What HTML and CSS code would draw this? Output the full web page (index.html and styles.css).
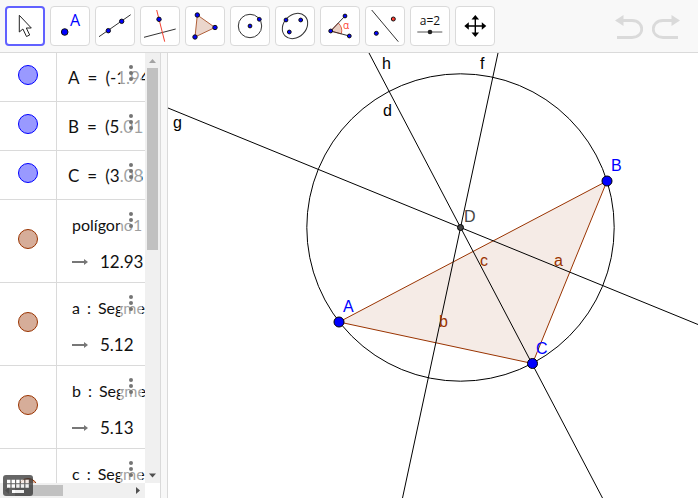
FILE: index.html
```html
<!DOCTYPE html>
<html lang="es">
<head>
    <meta charset="UTF-8">
    <meta name="viewport" content="width=device-width, initial-scale=1.0">
    <title>Circuncentro</title>
    <link rel="stylesheet" href="styles.css">
</head>
<body>
    <!-- Barra de herramientas -->
    <header class="toolbar">
        <button type="button" class="tool selected" aria-label="Elige y mueve">
            <svg viewBox="0 0 32 32"><path d="M10.3 5.3V22l3.6-3 3.6 7.5 3.2-1.5-3.4-7h5z" fill="#fff" stroke="#222"/></svg>
        </button>
        <button type="button" class="tool" aria-label="Punto">
            <svg viewBox="0 0 32 32">
                <circle class="dot" cx="10.7" cy="22" r="3.3"/>
                <text class="icon-letter" x="16" y="16">A</text>
            </svg>
        </button>
        <button type="button" class="tool" aria-label="Recta">
            <svg viewBox="0 0 32 32">
                <path class="thin" d="M0 26.7L31.7 4.7"/>
                <circle class="dot" cx="9.3" cy="20.7" r="2.2"/>
                <circle class="dot" cx="22.7" cy="11.3" r="2.2"/>
            </svg>
        </button>
        <button type="button" class="tool" aria-label="Perpendicular">
            <svg viewBox="0 0 32 32">
                <path class="thin" d="M0 27.3L31.7 19"/>
                <path class="red-line" d="M12.7 0l8 31.7"/>
                <circle class="dot" cx="15" cy="9.3" r="2.2"/>
            </svg>
        </button>
        <button type="button" class="tool" aria-label="Polígono">
            <svg viewBox="0 0 32 32">
                <path d="M8.3 5L26 17.5 6 27z" fill="#ebd6cc" stroke="#b0603a"/>
                <circle class="dot" cx="8.3" cy="5" r="2.2"/>
                <circle class="dot" cx="26" cy="17.5" r="2.2"/>
                <circle class="dot" cx="6" cy="27" r="2.2"/>
            </svg>
        </button>
        <button type="button" class="tool" aria-label="Circunferencia">
            <svg viewBox="0 0 32 32">
                <circle class="thin" cx="16" cy="16" r="11.7"/>
                <circle class="dot" cx="16" cy="16" r="1.9"/>
                <circle class="dot" cx="25.3" cy="9.3" r="1.9"/>
            </svg>
        </button>
        <button type="button" class="tool" aria-label="Elipse">
            <svg viewBox="0 0 32 32">
                <ellipse class="thin" cx="16" cy="16" rx="14" ry="11.2" transform="rotate(-45 16 16)"/>
                <circle class="dot" cx="7" cy="10" r="1.9"/>
                <circle class="dot" cx="21.7" cy="10" r="1.9"/>
                <circle class="dot" cx="10.3" cy="22" r="1.9"/>
            </svg>
        </button>
        <button type="button" class="tool" aria-label="Ángulo">
            <svg viewBox="0 0 32 32">
                <path d="M6.7 21l7.6-8a11 11 0 0 1 3 10.9z" fill="#ebd0c4" stroke="#e0604a"/>
                <path class="thin" d="M21 6L6.7 21l18.6 5"/>
                <circle class="dot" cx="21" cy="6" r="1.9"/>
                <circle class="dot" cx="6.7" cy="21" r="1.9"/>
                <circle class="dot" cx="25.3" cy="26" r="1.9"/>
                <text class="icon-alpha" x="19" y="19">α</text>
            </svg>
        </button>
        <button type="button" class="tool" aria-label="Simetría axial">
            <svg viewBox="0 0 32 32">
                <path class="thin" d="M2.7 0l26.6 31.7"/>
                <circle class="dot" cx="7.3" cy="23.3" r="2"/>
                <circle class="dot dot-red" cx="24.3" cy="9" r="2"/>
            </svg>
        </button>
        <button type="button" class="tool" aria-label="Deslizador">
            <svg viewBox="0 0 32 32">
                <text class="icon-slider" x="16" y="15">a=2</text>
                <path d="M3.3 22H28.3" stroke="#555"/>
                <circle cx="16" cy="22" r="2.3" fill="#222"/>
            </svg>
        </button>
        <button type="button" class="tool" aria-label="Desplaza vista gráfica">
            <svg viewBox="0 0 32 32">
                <path d="M16.3 8v16M8.3 16h16" stroke="#000" stroke-width="1.4"/>
                <path d="M16.3 5l3.8 4.5h-7.6zM16.3 27l3.8-4.5h-7.6zM5.3 16l4.5-3.8v7.6zM27.3 16l-4.5-3.8v7.6z" fill="#000"/>
            </svg>
        </button>

        <div class="history">
            <button type="button" aria-label="Deshacer">
                <svg viewBox="0 0 28 26">
                    <path d="M0 7.5L8.5 2v11z" fill="#dadada"/>
                    <path d="M8 7.5h9c13 0 13 17 0 17H2" stroke="#dadada" stroke-width="2.8"/>
                </svg>
            </button>
            <button type="button" aria-label="Rehacer">
                <svg viewBox="0 0 28 26">
                    <path d="M28 7.5L19.5 2v11z" fill="#dadada"/>
                    <path d="M20 7.5h-9c-13 0-13 17 0 17h15" stroke="#dadada" stroke-width="2.8"/>
                </svg>
            </button>
        </div>
    </header>

    <main class="workspace">
        <!-- Vista algebraica -->
        <aside class="algebra">
            <ul class="object-list">
                <li class="object">
                    <div class="marble-cell"><button type="button" class="marble point" aria-label="Mostrar A"></button></div>
                    <div class="definition"><p>A<span class="equals">=</span>(-1.94</p></div>
                    <button type="button" class="more" aria-label="Más"><i></i><i></i><i></i></button>
                </li>
                <li class="object">
                    <div class="marble-cell"><button type="button" class="marble point" aria-label="Mostrar B"></button></div>
                    <div class="definition"><p>B<span class="equals">=</span>(5.01</p></div>
                    <button type="button" class="more" aria-label="Más"><i></i><i></i><i></i></button>
                </li>
                <li class="object">
                    <div class="marble-cell"><button type="button" class="marble point" aria-label="Mostrar C"></button></div>
                    <div class="definition"><p>C<span class="equals">=</span>(3.08</p></div>
                    <button type="button" class="more" aria-label="Más"><i></i><i></i><i></i></button>
                </li>
                <li class="object with-value">
                    <div class="marble-cell"><button type="button" class="marble" aria-label="Mostrar polígono1"></button></div>
                    <div class="definition">
                        <p>polígono1</p>
                        <p class="value"><svg viewBox="0 0 16 8"><path d="M0 4h13" stroke="#777" stroke-width="2"/><path d="M12 1l4 3-4 3z" fill="#777"/></svg>12.93</p>
                    </div>
                    <button type="button" class="more" aria-label="Más"><i></i><i></i><i></i></button>
                </li>
                <li class="object with-value">
                    <div class="marble-cell"><button type="button" class="marble" aria-label="Mostrar a"></button></div>
                    <div class="definition">
                        <p>a<span class="colon">:</span>Segmento</p>
                        <p class="value"><svg viewBox="0 0 16 8"><path d="M0 4h13" stroke="#777" stroke-width="2"/><path d="M12 1l4 3-4 3z" fill="#777"/></svg>5.12</p>
                    </div>
                    <button type="button" class="more" aria-label="Más"><i></i><i></i><i></i></button>
                </li>
                <li class="object with-value">
                    <div class="marble-cell"><button type="button" class="marble" aria-label="Mostrar b"></button></div>
                    <div class="definition">
                        <p>b<span class="colon">:</span>Segmento</p>
                        <p class="value"><svg viewBox="0 0 16 8"><path d="M0 4h13" stroke="#777" stroke-width="2"/><path d="M12 1l4 3-4 3z" fill="#777"/></svg>5.13</p>
                    </div>
                    <button type="button" class="more" aria-label="Más"><i></i><i></i><i></i></button>
                </li>
                <li class="object with-value">
                    <div class="marble-cell"><button type="button" class="marble" aria-label="Mostrar c"></button></div>
                    <div class="definition">
                        <p>c<span class="colon">:</span>Segmento</p>
                    </div>
                    <button type="button" class="more" aria-label="Más"><i></i><i></i><i></i></button>
                </li>
            </ul>
            <div class="scroll-y">
                <svg class="arrow" viewBox="0 0 15 15"><path d="M4 10h7L7.5 6z" fill="#a3a3a3"/></svg>
                <div class="thumb"></div>
                <svg class="arrow" viewBox="0 0 15 15"><path d="M4 5.5h7L7.5 9.5z" fill="#505050"/></svg>
            </div>
            <div class="scroll-x">
                <svg class="arrow" viewBox="0 0 15 15"><path d="M9 4v7L5 7.5z" fill="#a3a3a3"/></svg>
                <div class="thumb"></div>
                <svg class="arrow" viewBox="0 0 15 15"><path d="M6 4v7l4-3.5z" fill="#505050"/></svg>
            </div>
            <button type="button" class="keyboard" aria-label="Teclado">
                <svg viewBox="0 0 30 21">
                    <path d="M4 6.5h22M4 11h22" stroke="#fff" stroke-width="3.4" stroke-dasharray="3.4 1.2"/>
                    <path d="M9 16.5h12" stroke="#fff" stroke-width="3"/>
                </svg>
            </button>
        </aside>

        <div class="splitter"></div>

        <!-- Vista gráfica -->
        <section class="graphics">
            <svg class="plot">
                <path class="triangle" d="M171 269L439 128 364.5 310.5z"/>
                <circle class="line" cx="292.5" cy="174.5" r="153.7"/>
                <path class="line" d="M201 0L668 890"/>
                <path class="line" d="M330 0L139 890"/>
                <path class="line" d="M0 55L1060 488"/>
                <circle class="vertex" cx="171" cy="269" r="5"/>
                <circle class="vertex" cx="439" cy="128" r="5"/>
                <circle class="vertex" cx="364.5" cy="310.5" r="5"/>
                <circle class="center" cx="292.5" cy="174.5" r="3"/>
                <text x="214" y="16">h</text>
                <text x="215" y="63">d</text>
                <text x="5" y="75">g</text>
                <text x="312" y="16">f</text>
                <text class="blue" x="443" y="118">B</text>
                <text class="blue" x="175" y="259">A</text>
                <text class="blue" x="368" y="301">C</text>
                <text class="gray" x="296" y="169">D</text>
                <text class="brown" x="312" y="213">c</text>
                <text class="brown" x="386" y="213">a</text>
                <text class="brown" x="271" y="274">b</text>
            </svg>
        </section>
    </main>
</body>
</html>
```
FILE: styles.css
```css
* {
    margin: 0;
    padding: 0;
    box-sizing: border-box;
}

body {
    display: flex;
    flex-direction: column;
    height: 100vh;
    padding: 0 2px 2px 0;
    background-color: #ffffff;
    font-family: "Liberation Sans", Arial, sans-serif;
    overflow: hidden;
}

button {
    border: none;
    background: none;
    cursor: pointer;
}

svg {
    display: block;
    fill: none;
}

/* Barra de herramientas */
.toolbar {
    display: flex;
    align-items: center;
    gap: 5px;
    height: 53px;
    flex-shrink: 0;
    padding: 0 18px 0 5px;
    background-color: #f8f8f8;
    border-bottom: 1px solid #dadada;
}

.tool {
    display: flex;
    align-items: center;
    justify-content: center;
    width: 40px;
    height: 40px;
    flex-shrink: 0;
    background-color: #ffffff;
    border: 1px solid #dadada;
    border-radius: 4px;
}

.tool.selected {
    border: 2px solid #6161ff;
}

.tool svg {
    width: 32px;
    height: 32px;
    flex-shrink: 0;
}

.thin {
    stroke: #333333;
    stroke-width: 1;
}

.red-line {
    stroke: #f04030;
    stroke-width: 1;
}

.dot {
    fill: #0000ff;
    stroke: #111111;
    stroke-width: 1;
}

.dot-red {
    fill: #ff3b30;
}

.icon-letter {
    fill: #0000ff;
    font: 16px "Open Sans", sans-serif;
}

.icon-alpha {
    fill: #ff3b30;
    font: 10px "Open Sans", sans-serif;
}

.icon-slider {
    fill: #111111;
    font: 12px "Open Sans", sans-serif;
    text-anchor: middle;
}

.history {
    display: flex;
    gap: 9px;
    margin-left: auto;
}

.history svg {
    width: 28px;
    height: 26px;
}

.workspace {
    display: flex;
    flex: 1;
    min-height: 0;
}

/* Vista algebraica */
.algebra {
    position: relative;
    display: grid;
    grid-template-columns: 1fr 15px;
    grid-template-rows: minmax(0, 1fr) 15px;
    width: 160px;
    flex-shrink: 0;
}

.object-list {
    list-style: none;
    overflow: hidden;
}

.object {
    position: relative;
    display: flex;
    height: 49px;
    border-bottom: 1px solid #dadada;
}

.object.with-value {
    height: 83px;
}

.marble-cell {
    display: flex;
    align-items: center;
    justify-content: center;
    width: 57px;
    flex-shrink: 0;
    padding-bottom: 4px;
    border-right: 1px solid #dadada;
}

.marble {
    width: 20px;
    height: 20px;
    background-color: #d6ad99;
    border: 1px solid #993300;
    border-radius: 50%;
}

.marble.point {
    background-color: #9999ff;
    border-color: #0000ff;
}

.definition {
    padding: 13px 0 0 11px;
    font-family: Lato, sans-serif;
    font-size: 17px;
    line-height: 24px;
    color: #111111;
    white-space: nowrap;
}

.with-value .definition {
    padding-left: 15px;
    font-size: 16px;
}

.equals {
    margin: 0 8px;
}

.colon {
    margin: 0 7px;
}

.definition .value {
    display: flex;
    align-items: center;
    gap: 12px;
    margin-top: 13px;
    font-size: 17px;
}

.value svg {
    width: 16px;
    height: 8px;
}

/* Los tres puntos tapan parte del texto */
.more {
    position: absolute;
    top: 12px;
    left: 120px;
    display: flex;
    flex-direction: column;
    align-items: center;
    gap: 2px;
    width: 22px;
    height: 32px;
    background-color: rgba(255, 255, 255, 0.6);
}

.more i {
    width: 4px;
    height: 4px;
    background-color: #757575;
    border-radius: 50%;
}

.scroll-y,
.scroll-x {
    display: flex;
    background-color: #f0f0f0;
}

.scroll-y {
    flex-direction: column;
}

.scroll-x {
    grid-column: 1;
}

.arrow {
    width: 15px;
    height: 15px;
    flex-shrink: 0;
}

.thumb {
    background-color: #c1c1c1;
}

.scroll-y .thumb {
    height: 182px;
    margin: 0 2px;
}

.scroll-y .arrow:last-child {
    margin-top: auto;
}

.scroll-x .thumb {
    width: 48px;
    margin: 2px 0;
}

.scroll-x .arrow:last-child {
    margin-left: auto;
}

.keyboard {
    position: absolute;
    left: 3px;
    bottom: 2px;
    width: 30px;
    height: 21px;
    background-color: #333333;
    border-radius: 3px;
    opacity: 0.75;
}

.splitter {
    width: 8px;
    flex-shrink: 0;
    background-color: #f8f8f8;
    border-left: 1px solid #dadada;
    border-right: 1px solid #dadada;
}

/* Vista gráfica */
.graphics {
    flex: 1;
    min-width: 0;
}

.plot {
    width: 100%;
    height: 100%;
}

.plot text {
    font-size: 16px;
    fill: #000000;
}

.plot .blue {
    fill: #0000ff;
}

.plot .gray {
    fill: #444444;
}

.plot .brown {
    fill: #993300;
}

.line {
    stroke: #000000;
    stroke-width: 1;
}

.triangle {
    fill: #f5ebe6;
    stroke: #993300;
    stroke-width: 1;
}

.vertex {
    fill: #0000ff;
    stroke: #000000;
    stroke-width: 1;
}

.center {
    fill: #444444;
    stroke: #000000;
    stroke-width: 1;
}
```
